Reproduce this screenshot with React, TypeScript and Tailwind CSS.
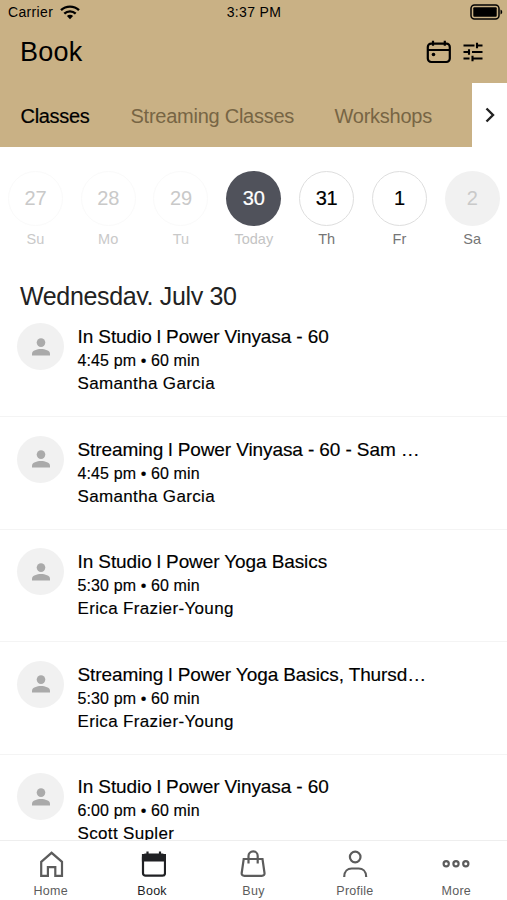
type TDay = {
  date: string;
  label: string;
  circle: string;
  labelColor: string;
};

type TSession = {
  title: string;
  time: string;
  teacher: string;
};

const pastCircle = "border border-[#fafafa] text-[#c9c9c9]";
const openCircle = "border border-[#dedede] text-black [-webkit-text-stroke:0.2px_black]";

const days: TDay[] = [
  { date: "27", label: "Su", circle: pastCircle, labelColor: "text-[#c9c9c9]" },
  { date: "28", label: "Mo", circle: pastCircle, labelColor: "text-[#c9c9c9]" },
  { date: "29", label: "Tu", circle: pastCircle, labelColor: "text-[#c9c9c9]" },
  {
    date: "30",
    label: "Today",
    circle: "bg-[#50525b] text-white [-webkit-text-stroke:0.2px_white]",
    labelColor: "text-[#c4c4c4]",
  },
  { date: "31", label: "Th", circle: openCircle, labelColor: "text-[#757575]" },
  { date: "1", label: "Fr", circle: openCircle, labelColor: "text-[#757575]" },
  {
    date: "2",
    label: "Sa",
    circle: "bg-[#f1f1f1] text-[#c9c9c9]",
    labelColor: "text-[#757575]",
  },
];

const sessions: TSession[] = [
  {
    title: "In Studio l Power Vinyasa - 60",
    time: "4:45 pm • 60 min",
    teacher: "Samantha Garcia",
  },
  {
    title: "Streaming l Power Vinyasa - 60 - Sam …",
    time: "4:45 pm • 60 min",
    teacher: "Samantha Garcia",
  },
  {
    title: "In Studio l Power Yoga Basics",
    time: "5:30 pm • 60 min",
    teacher: "Erica Frazier-Young",
  },
  {
    title: "Streaming l Power Yoga Basics, Thursd…",
    time: "5:30 pm • 60 min",
    teacher: "Erica Frazier-Young",
  },
  {
    title: "In Studio l Power Vinyasa - 60",
    time: "6:00 pm • 60 min",
    teacher: "Scott Supler",
  },
];

function StatusBar() {
  return (
    <div className="grid h-6 grid-cols-3 items-center pr-1 pl-2 text-[14px] leading-6 tracking-[0.35px]">
      <div className="flex items-center gap-[7px]">
        <span>Carrier</span>
        <svg viewBox="0 0 20 15" className="h-[15px] w-5" fill="none" aria-hidden="true">
          <path d="M1 5.2a13 13 0 0 1 18 0" stroke="currentColor" strokeWidth="2.4" />
          <path d="M4.3 8.7a8.2 8.2 0 0 1 11.4 0" stroke="currentColor" strokeWidth="2.3" />
          <path d="M10 14.2 6.9 11.1a4.4 4.4 0 0 1 6.2 0z" fill="currentColor" />
        </svg>
      </div>
      <span className="-ml-[3px] text-center">3:37 PM</span>
      <svg viewBox="0 0 33 16" className="h-4 w-[33px] justify-self-end" fill="none" aria-hidden="true">
        <rect x="1" y="1" width="28" height="14" rx="3.5" stroke="currentColor" strokeWidth="1.5" />
        <rect x="3.3" y="3.3" width="23.4" height="9.4" rx="1" fill="currentColor" />
        <path d="M30.5 5.5c2.3.8 2.3 4.2 0 5z" fill="currentColor" />
      </svg>
    </div>
  );
}

function Header() {
  return (
    <header className="h-[147px] shrink-0 bg-[#c9b185] text-black">
      <StatusBar />
      <div className="flex h-[59px] items-center justify-between pr-6 pb-[3px] pl-5">
        <h1 className="text-[27px] leading-8 tracking-[0.2px]">Book</h1>
        <div className="flex items-center gap-[11px]">
          <svg viewBox="0 0 26 24" className="h-6 w-[26px]" fill="none" stroke="currentColor" strokeWidth="2.2" aria-hidden="true">
            <rect x="1.8" y="3.6" width="22" height="18.4" rx="3.4" />
            <path d="M1.8 10h22M7 .8v5M18.8.8v5" />
            <circle cx="7.5" cy="14.5" r="1.8" fill="currentColor" stroke="none" />
          </svg>
          <svg viewBox="0 0 20 20" className="h-5 w-5" fill="none" stroke="currentColor" strokeWidth="2.1" aria-hidden="true">
            <path d="M.5 3.5h11M14.5 3.5h5M14 .8v5.4M.5 10h5M9 10h10.5M6 7.2v5.6M.5 16.5h6M10 16.5h9.5M9.5 13.8v5.4" />
          </svg>
        </div>
      </div>
      <nav className="flex h-16 text-[20px] text-[#776544]">
        <div className="flex flex-1 items-center gap-10 pt-px pl-[20.5px] whitespace-nowrap">
          <span className="w-[70px] tracking-[-0.3px] text-black [-webkit-text-stroke:0.2px_black]">Classes</span>
          <span className="w-[164px] tracking-[-0.25px]">Streaming Classes</span>
          <span className="tracking-[-0.25px]">Workshops</span>
        </div>
        <button className="flex w-[35px] items-center justify-center bg-white text-[#222]" aria-label="More tabs">
          <svg viewBox="0 0 10 16" className="h-4 w-2.5" fill="none" stroke="currentColor" strokeWidth="2.4" aria-hidden="true">
            <path d="m1.5 1.5 6.5 6.5-6.5 6.5" />
          </svg>
        </button>
      </nav>
    </header>
  );
}

function DayPicker() {
  return (
    <ul className="flex pt-[23.5px] pl-[7px]">
      {days.map((day) => (
        <li key={day.label} className="flex w-[72.8px] shrink-0 flex-col items-center pr-4">
          <div
            className={`flex h-[55px] w-[55px] shrink-0 items-center justify-center rounded-full text-[20px] tracking-[-0.2px] ${day.circle}`}
          >
            {day.date}
          </div>
          <span className={`mt-[3px] text-[14.5px] leading-5 ${day.labelColor}`}>{day.label}</span>
        </li>
      ))}
    </ul>
  );
}

function SessionRow({ session }: { session: TSession }) {
  return (
    <li className="flex h-[112.5px] shrink-0 border-b border-[#f4f4f4] pt-[17px] pl-[17px]">
      <div className="mt-[1.5px] flex h-[47px] w-[47px] items-center justify-center rounded-full bg-[#f1f1f1]">
        <svg viewBox="0 0 18 18" className="h-[18px] w-[18px] fill-[#aaa]" aria-hidden="true">
          <circle cx="9" cy="4.6" r="4.3" />
          <path d="M0 17.5v-2C0 12.6 5 11 9 11s9 1.6 9 4.5v2z" />
        </svg>
      </div>
      <div className="ml-[13.5px] pt-[1.5px] text-black [-webkit-text-stroke:0.15px_black]">
        <h3 className="text-[19px] leading-[27px] tracking-[-0.1px]">{session.title}</h3>
        <p className="text-[16px] leading-[22px] tracking-[0.12px]">{session.time}</p>
        <p className="text-[17px] leading-[23px] tracking-[0.35px]">{session.teacher}</p>
      </div>
    </li>
  );
}

function TabBar() {
  return (
    <nav className="grid h-[60px] shrink-0 grid-cols-5 border-t border-[#eee] bg-white pt-[9px] text-[12.5px] text-[#5c5c5c]">
      <TabItem label="Home">
        <path d="M4.2 11.8 14.6 2.8 25 11.8V25.8h-6.7v-8.6h-7.4v8.6H4.2z" />
      </TabItem>
      <TabItem label="Book" active>
        <rect x="5" y="4.5" width="22" height="21.2" rx="2.5" />
        <path d="M5 5h22v5.5H5z" fill="currentColor" />
        <path d="M9.5 1.5v4M22 1.5v4" />
      </TabItem>
      <TabItem label="Buy">
        <path d="M4.7 9h18.8l2 14q.3 2.8-2.7 2.8H5.4q-3 0-2.7-2.8z" />
        <path d="M9.5 13.5V6a4.6 4.6 0 0 1 9.2 0v7.5" />
      </TabItem>
      <TabItem label="Profile">
        <circle cx="14.2" cy="7" r="5.3" />
        <path d="M3.2 27c0-6 3.8-8.5 7.5-8.5h7c3.7 0 7.5 2.5 7.5 8.5" />
      </TabItem>
      <TabItem label="More">
        <circle cx="4.2" cy="13.8" r="2.6" />
        <circle cx="14" cy="13.8" r="2.6" />
        <circle cx="23.8" cy="13.8" r="2.6" />
      </TabItem>
    </nav>
  );
}

function TabItem({
  children,
  label,
  active = false,
}: {
  children: React.ReactNode;
  label: string;
  active?: boolean;
}) {
  return (
    <button className={`flex flex-col items-center ${active ? "text-[#202124]" : ""}`}>
      <svg viewBox="0 0 28 28" className="h-7 w-7" fill="none" stroke="currentColor" strokeWidth="2.2" aria-hidden="true">
        {children}
      </svg>
      <span className="mt-[5px] leading-4 tracking-[0.25px]">{label}</span>
    </button>
  );
}

export default function App() {
  return (
    <div className="flex h-[900px] w-[507px] flex-col overflow-hidden bg-white font-['Liberation_Sans',Arial,sans-serif]">
      <Header />
      <main className="min-h-0 flex-1 overflow-hidden">
        <DayPicker />
        <h2 className="mt-8 h-6 overflow-hidden pl-5 text-[25px] leading-[31px] tracking-[-0.35px] text-[#222]">
          Wednesday, July 30
        </h2>
        <ul>
          {sessions.map((session, i) => (
            <SessionRow key={i} session={session} />
          ))}
        </ul>
      </main>
      <TabBar />
    </div>
  );
}
